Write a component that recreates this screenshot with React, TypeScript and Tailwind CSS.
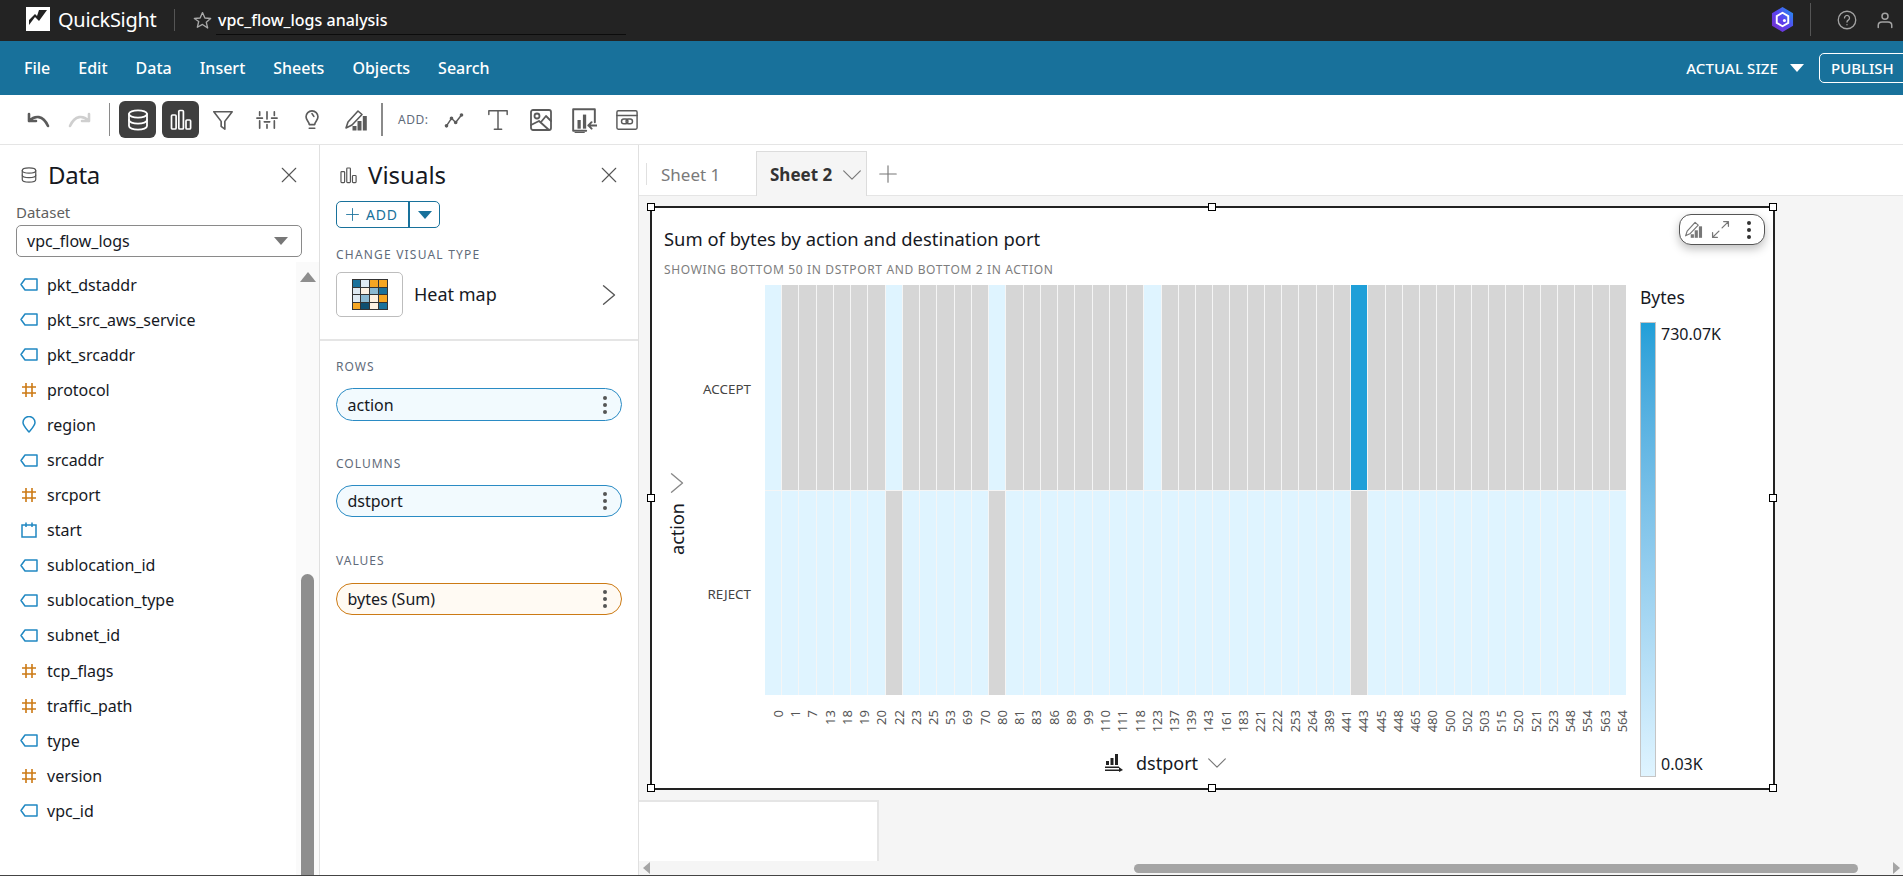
import React from "react";

const ports = [0,1,7,13,18,19,20,22,23,25,53,69,70,80,81,83,86,89,99,110,111,118,123,137,139,143,161,183,221,222,253,264,389,441,443,445,448,465,480,500,502,503,515,520,521,523,548,554,563,564];

type P = { className?: string; sw?: number; children?: React.ReactNode };
const I = ({ className = "", sw = 2, children }: P) => (
  <svg viewBox="0 0 24 24" fill="none" stroke="currentColor" strokeWidth={sw} strokeLinecap="round" strokeLinejoin="round" className={className}>{children}</svg>
);
const Db = (p: P) => <I {...p}><ellipse cx="12" cy="6" rx="9" ry="3.6"/><path d="M3 6v12c0 2 4 3.6 9 3.6s9-1.6 9-3.6V6"/><path d="M3 12c0 2 4 3.6 9 3.6s9-1.6 9-3.6"/></I>;
const Bars = (p: P) => <I {...p}><rect x="2.5" y="7" width="4.6" height="14" rx="1"/><rect x="9.8" y="2.5" width="4.6" height="18.5" rx="1"/><rect x="17" y="12" width="4.6" height="9" rx="1"/></I>;
const Funnel = (p: P) => <I {...p}><path d="M2 3h20l-8 10.5V22l-4-3v-5.5z"/></I>;
const Sliders = (p: P) => <I {...p}><path d="M4 3v4M4 13v8M12 3v8M12 17v4M20 3v4M20 13v8M1 10h6M9 14h6M17 10h6"/></I>;
const Bulb = (p: P) => <I {...p}><path d="M9 17c0-3-3.5-4.5-3.5-8.500a6.500 6.500 0 0 1 13 0c0 4-3.500 5.500-3.500 8.500z"/><path d="M9 21h6"/><path d="M12 5l2 3"/></I>;
const PenChart = (p: P) => (
  <I {...p}><path d="M2 20l2-6L14 3l4 3.500L8 17z"/><g fill="currentColor" stroke="none"><rect x="8.500" y="18" width="4" height="4.500"/><rect x="13.500" y="13" width="4" height="9.500"/><rect x="18.800" y="8" width="4" height="14.500"/></g></I>
);
const X = ({ className = "" }: P) => <I className={className} sw={1.5}><path d="M3 3l18 18M21 3L3 21"/></I>;
const Chev = ({ className = "" }: P) => <I className={className} sw={1.4}><path d="M2 7l10 10L22 7"/></I>;
const Right = ({ className = "" }: P) => <I className={className} sw={1.5}><path d="M6 2l12 10L6 22"/></I>;

const Tag = () => (
  <svg viewBox="0 0 18 13" fill="none" stroke="#2088c2" strokeWidth="1.5" strokeLinejoin="round" className="w-[18px] h-[13px]"><path d="M5 1h12v11H5L1 6.500z"/></svg>
);
const Hash = () => (
  <svg viewBox="0 0 16 16" fill="none" stroke="#cc7a14" strokeWidth="1.600" className="w-[16px] h-[16px] ml-[1px]"><path d="M5 1v14M11 1v14M1 5h14M1 11h14"/></svg>
);
const Geo = () => (
  <svg viewBox="0 0 14 17" fill="none" stroke="#2088c2" strokeWidth="1.500" strokeLinejoin="round" className="w-[14px] h-[17px] ml-[2px]"><path d="M7 16C4 12.500 1 9.500 1 6.500a6 6 0 0 1 12 0C13 9.500 10 12.500 7 16z"/></svg>
);
const Cal = () => (
  <svg viewBox="0 0 16 16" fill="none" stroke="#2088c2" strokeWidth="1.500" className="w-[16px] h-[16px] ml-[1px]"><path d="M1 3h14v12H1zM5 0.500V5M11 0.500V5"/></svg>
);

const fields: [string, React.ReactNode][] = [
  ["pkt_dstaddr", <Tag />], ["pkt_src_aws_service", <Tag />], ["pkt_srcaddr", <Tag />], ["protocol", <Hash />], ["region", <Geo />],
  ["srcaddr", <Tag />], ["srcport", <Hash />], ["start", <Cal />], ["sublocation_id", <Tag />], ["sublocation_type", <Tag />],
  ["subnet_id", <Tag />], ["tcp_flags", <Hash />], ["traffic_path", <Hash />], ["type", <Tag />], ["version", <Hash />], ["vpc_id", <Tag />],
];

const Dots = ({ className = "" }: P) => (
  <span className={"flex flex-col gap-[3px] " + className}>
    <span className="w-[4px] h-[4px] rounded-full bg-current" /><span className="w-[4px] h-[4px] rounded-full bg-current" /><span className="w-[4px] h-[4px] rounded-full bg-current" />
  </span>
);

const Pill = ({ label, h, tone }: { label: string; h: string; tone: "blue" | "orange" }) => (
  <div className={"w-[286px] rounded-full border flex items-center pl-[10.500px] pr-[14px] text-[16px] " + h + " " + (tone === "blue" ? "bg-[#f2fafe] border-[#2a8bc4]" : "bg-[#fffaf3] border-[#cc7a14]")}>
    <span className="flex-1">{label}</span>
    <Dots className="text-[#555]" />
  </div>
);

const SecLabel = ({ children, className = "" }: P) => (
  <div className={"text-[12px] leading-[18px] tracking-[1.2px] text-[#5f6b7a] " + className}>{children}</div>
);

const Handle = ({ className }: { className: string }) => (
  <span className={"absolute w-[8px] h-[8px] bg-white border-[1.5px] border-black " + className} />
);

const Triangle = ({ className = "" }: P) => (
  <span className={"w-0 h-0 border-l-[7px] border-r-[7px] border-t-[8px] border-l-transparent border-r-transparent " + className} />
);

const heatColors = ["#1a719b","#dfeaf2","#f5a623","#f5a623","#dfeaf2","#fdf1e2","#8ab8d0","#1a719b","#dfeaf2","#8ab8d0","#fdf1e2","#f5a623","#f5a623","#0f4f70","#fdf1e2","#1a719b"];

export default function App() {
  return (
    <div className="w-[1903px] h-[876px] overflow-hidden flex flex-col border-b border-[#444] bg-white text-[#16191f] font-['Noto_Sans','Open_Sans',sans-serif]">
      {/* top bar */}
      <header className="h-[41px] shrink-0 bg-[#232323] flex items-start text-white">
        <svg viewBox="0 0 24 24" className="w-[24px] h-[24px] ml-[26px] mt-[7px]">
          <rect width="24" height="24" fill="#fff" />
          <path d="M3 18l6-8 4 4 8-11h-8l-2 6-2-2-6 6z" fill="#232323" />
        </svg>
        <span className="ml-[8px] text-[20px] leading-[40px] w-[116px] tracking-[-0.3px]">QuickSight</span>
        <span className="w-px h-[22px] bg-[#555] mt-[9px]" />
        <svg viewBox="0 0 24 24" fill="none" stroke="#a9a9a9" strokeWidth="1.700" strokeLinejoin="round" className="w-[19px] h-[19px] ml-[18px] mt-[11px]"><path d="M12 2l3 6.800 7.300.7-5.500 4.800 1.700 7.200L12 17l-6.500 3.500 1.700-7.200L1.700 9.500 9 8.800z"/></svg>
        <div className="ml-[4px] w-[410px] h-[35px] border-b border-[#0c0c0c] pl-[2px] text-[16px] font-medium leading-[40px]">vpc_flow_logs analysis</div>
        <div className="ml-auto flex items-start">
          <svg viewBox="0 0 24 26" className="w-[23px] h-[25px] mt-[7px]">
            <defs><linearGradient id="qhex" x1="1" y1="0" x2="0" y2="1"><stop offset="0" stopColor="#1b9bf0"/><stop offset="0.5" stopColor="#5a43ef"/><stop offset="1" stopColor="#7a2bc8"/></linearGradient></defs>
            <path d="M12 0l11 6.500v13L12 26 1 19.500v-13z" fill="url(#qhex)"/>
            <path d="M12 6l6 3.500v7L12 20l-6-3.500v-7z" fill="none" stroke="#fff" strokeWidth="2"/>
            <circle cx="14" cy="14" r="1.600" fill="#fff"/>
          </svg>
          <span className="w-px h-[33px] bg-[#555] mt-[3px] ml-[16px]" />
          <I className="w-[20px] h-[20px] ml-[26px] mt-[10px] text-[#a3a3a3]" sw={1.6}><circle cx="12" cy="12" r="10.500"/><path d="M9 9.500a3 3 0 1 1 4.500 2.600c-1 .6-1.500 1.200-1.500 2.400M12 17.500v.3"/></I>
          <I className="w-[18px] h-[18px] ml-[19px] mr-[9px] mt-[11px] text-[#a3a3a3]" sw={2}><circle cx="12" cy="7" r="4"/><path d="M3 22v-3c0-3 2.500-4.500 5-4.500h8c2.500 0 5 1.500 5 4.500v3"/></I>
        </div>
      </header>

      {/* menu */}
      <nav className="h-[54px] shrink-0 bg-[#18719b] flex items-center pl-[24px] gap-[28px] text-white text-[16px] font-medium">
        {["File","Edit","Data","Insert","Sheets","Objects","Search"].map((m) => <span key={m}>{m}</span>)}
        <span className="ml-auto text-[15px] tracking-[0.1px]">ACTUAL SIZE</span>
        <Triangle className="border-t-white -ml-[16px]" />
        <span className="-ml-[13px] -mr-[30px] w-[114px] h-[30px] rounded-[5px] border border-white flex items-center pl-[11px] text-[15px]">PUBLISH</span>
      </nav>

      {/* toolbar */}
      <div className="h-[50px] shrink-0 border-b border-[#e5e5e5] flex items-center text-[#5b5b5b]">
        <svg viewBox="0 0 24 16" fill="none" stroke="#5b5b5b" strokeWidth="2.600" strokeLinecap="round" strokeLinejoin="round" className="w-[24px] h-[16px] ml-[26px]"><path d="M3 2v7h7M3 9c6-6 14-6 19 5"/></svg>
        <svg viewBox="0 0 24 16" fill="none" stroke="#cfcfcf" strokeWidth="2.600" strokeLinecap="round" strokeLinejoin="round" className="w-[24px] h-[16px] ml-[18px]"><path d="M21 2v7h-7M21 9C15 3 7 3 2 14"/></svg>
        <span className="w-px h-[33px] bg-[#8a8a8a] ml-[17px]" />
        <span className="w-[37px] h-[37px] rounded-[6px] bg-[#3f3f3f] ml-[9px] flex items-center justify-center text-white"><Db className="w-[24px] h-[26px]" sw={1.8} /></span>
        <span className="w-[37px] h-[37px] rounded-[6px] bg-[#3f3f3f] ml-[6px] flex items-center justify-center text-white"><Bars className="w-[24px] h-[24px]" sw={1.7} /></span>
        <Funnel className="w-[22px] h-[24px] ml-[13px]" sw={1.8} />
        <Sliders className="w-[24px] h-[22px] ml-[21px]" sw={1.8} />
        <Bulb className="w-[22px] h-[26px] ml-[22px]" sw={1.8} />
        <PenChart className="w-[24px] h-[24px] ml-[21px]" sw={1.6} />
        <span className="w-[2px] h-[33px] bg-[#8a8a8a] ml-[13px]" />
        <span className="ml-[15px] text-[12px] tracking-[0.5px] w-[36px] text-[#5f6b7a]">ADD:</span>
        <I className="w-[24px] h-[20px] ml-[8px]" sw={1.8}><path d="M3 19l6-9 5 5 7-9"/><g fill="currentColor"><circle cx="3" cy="19" r="1.300"/><circle cx="9" cy="10" r="1.300"/><circle cx="14" cy="15" r="1.300"/><circle cx="21" cy="6" r="1.300"/></g></I>
        <I className="w-[22px] h-[22px] ml-[21px]" sw={1.6}><path d="M2 6V2h20v4M12 2v20M8 22h8"/></I>
        <I className="w-[24px] h-[24px] ml-[20px]" sw={1.8}><rect x="2" y="2" width="20" height="20" rx="2"/><circle cx="8" cy="8" r="2.500"/><path d="M2 17l8-4 10 9M12 14l5-6 5 5"/></I>
        <I className="w-[26px] h-[26px] ml-[18px]" sw={1.8}><path d="M14 22H2V2h20v12"/><path d="M4 24h8"/><g fill="currentColor" stroke="none"><rect x="6" y="12" width="3" height="8"/><rect x="11" y="7" width="3" height="13"/></g><path d="M24 17h-8M19 14l-3 3 3 3"/></I>
        <I className="w-[22px] h-[22px] ml-[19px]" sw={1.6}><rect x="1" y="2" width="22" height="20" rx="1.500"/><path d="M1 7h22"/><rect x="6" y="11" width="7" height="5" rx="2.500"/><rect x="11" y="11" width="7" height="5" rx="2.500"/></I>
      </div>

      <div className="flex flex-1 min-h-0">
        {/* data panel */}
        <aside className="w-[320px] shrink-0 border-r border-[#e0e0e0] flex flex-col">
          <div className="h-[60px] shrink-0 flex items-center pl-[20px] pr-[21px]">
            <Db className="w-[18px] h-[20px] text-[#555]" sw={1.6} />
            <span className="ml-[10px] text-[24px] tracking-[-0.3px] flex-1">Data</span>
            <X className="w-[18px] h-[18px] text-[#555]" />
          </div>
          <div className="pl-[16px] text-[15px] leading-[20px] text-[#5f5f5f] -mt-[3px]">Dataset</div>
          <div className="ml-[16px] w-[286px] h-[32px] shrink-0 mt-[3px] rounded-[5px] border border-[#8a8a8a] flex items-center pl-[10px] pr-[13px] text-[16px]">
            <span className="flex-1">vpc_flow_logs</span>
            <Triangle className="border-t-[#777]" />
          </div>
          <div className="flex flex-1 min-h-0 mt-[5px] overflow-hidden">
            <ul className="flex-1 pt-[5px] pl-[20px]">
              {fields.map(([n, ic]) => (
                <li key={n} className="h-[35.100px] flex items-center text-[16px]">
                  <span className="w-[27px] flex items-center">{ic}</span>{n}
                </li>
              ))}
            </ul>
            <div className="w-[23px] shrink-0 bg-[#fafafa] flex flex-col justify-between items-center">
              <span className="mt-[10px] w-0 h-0 border-l-[8px] border-r-[8px] border-b-[10px] border-l-transparent border-r-transparent border-b-[#8e8e8e]" />
              <span className="w-[13px] h-[301px] bg-[#8e8e8e] rounded-t-[7px]" />
            </div>
          </div>
        </aside>

        {/* visuals panel */}
        <aside className="w-[319px] shrink-0 border-r border-[#e0e0e0] flex flex-col">
          <div className="h-[56px] shrink-0 flex items-center pl-[19px] pr-[20px] pt-[4px]">
            <Bars className="w-[19px] h-[19px] text-[#555]" sw={1.5} />
            <span className="ml-[10px] text-[24px] flex-1">Visuals</span>
            <X className="w-[18px] h-[18px] text-[#555]" />
          </div>
          <div className="ml-[16px] w-[104px] h-[27px] shrink-0 rounded-[5px] border border-[#18719b] flex items-center text-[#18719b] text-[14px] tracking-[0.8px]">
            <span className="w-[71px] flex items-center pl-[9px] gap-[7px]"><I className="w-[13px] h-[13px]" sw={1.6}><path d="M12 1v22M1 12h22"/></I>ADD</span>
            <span className="w-[2px] h-full bg-[#18719b]" />
            <span className="flex-1 flex justify-center"><Triangle className="border-t-[#18719b]" /></span>
          </div>
          <SecLabel className="ml-[16px] mt-[18px]">CHANGE VISUAL TYPE</SecLabel>
          <div className="ml-[16px] mr-[18px] mt-[8px] flex items-center">
            <span className="w-[67px] h-[45px] rounded-[5px] border border-[#bdbdbd] flex items-center justify-center">
              <span className="w-[36px] h-[31px] bg-[#333] p-[1px] grid grid-cols-4 grid-rows-4 gap-px">
                {heatColors.map((c, i) => <span key={i} style={{ background: c }} />)}
              </span>
            </span>
            <span className="ml-[11px] flex-1 text-[18px]">Heat map</span>
            <Right className="w-[22px] h-[22px] text-[#555]" />
          </div>
          <div className="h-[2px] shrink-0 bg-[#e5e5e5] mt-[22px]" />
          <SecLabel className="ml-[16px] mt-[17px] tracking-[1px]">ROWS</SecLabel>
          <div className="ml-[16px] mt-[12px]"><Pill label="action" h="h-[33px]" tone="blue" /></div>
          <SecLabel className="ml-[16px] mt-[34px] tracking-[1px]">COLUMNS</SecLabel>
          <div className="ml-[16px] mt-[12px]"><Pill label="dstport" h="h-[32px]" tone="blue" /></div>
          <SecLabel className="ml-[16px] mt-[35px] tracking-[1px]">VALUES</SecLabel>
          <div className="ml-[16px] mt-[13px]"><Pill label="bytes (Sum)" h="h-[32px]" tone="orange" /></div>
        </aside>

        {/* main */}
        <main className="flex-1 min-w-0 flex flex-col">
          <div className="h-[51px] shrink-0 border-b border-[#e5e5e5] flex items-end relative">
            <div className="flex items-center h-[44px] w-[117px] shrink-0 pl-[7px] pt-[1px]">
              <span className="w-px h-[22px] bg-[#e0e0e0]" />
              <span className="ml-[14px] text-[17px] text-[#7a7a7a] pt-[2px]">Sheet 1</span>
            </div>
            <div className="w-[111px] h-[45px] -mb-px bg-[#f5f5f5] border border-b-0 border-[#dcdcdc] flex items-center pl-[13px] pt-[2px] text-[17px] font-bold text-[#333]">
              Sheet 2
              <Chev className="w-[20px] h-[20px] ml-[10px] text-[#777]" />
            </div>
            <I className="w-[18px] h-[18px] ml-[12px] mb-[12px] text-[#777]" sw={1.5}><path d="M12 1v22M1 12h22"/></I>
          </div>
          <div className="flex-1 min-h-0 bg-[#f5f5f5] flex flex-col">
            <div className="relative ml-[11px] mt-[10px] w-[1125px] h-[584px] shrink-0 bg-white border-2 border-[#222]">
              <Handle className="-left-[5px] -top-[5px]" />
              <Handle className="left-[556px] -top-[5px]" />
              <Handle className="-right-[4px] -top-[5px]" />
              <Handle className="-left-[5px] top-1/2 -translate-y-1/2" />
              <Handle className="-right-[4px] top-1/2 -translate-y-1/2" />
              <Handle className="-left-[5px] -bottom-[4px]" />
              <Handle className="left-[556px] -bottom-[4px]" />
              <Handle className="-right-[4px] -bottom-[4px]" />
              <div className="absolute right-[8px] top-[6px] w-[86px] h-[31px] rounded-[12px] border border-[#555] bg-white shadow-[0_4px_10px_rgba(0,0,0,0.25)] flex items-center pl-[4px] text-[#777]">
                <PenChart className="w-[19px] h-[19px]" sw={1.5} />
                <I className="w-[19px] h-[19px] ml-[8px]" sw={1.6}><path d="M14 10l8-8M16 2h6v6M10 14l-8 8M2 16v6h6"/></I>
                <Dots className="ml-[17px] text-[#333]" />
              </div>

              <div className="pl-[12px] pt-[19px] text-[18.4px] leading-[24px]">Sum of bytes by action and destination port</div>
              <div className="pl-[12px] mt-[10px] text-[12px] leading-[18px] text-[#7d7d7d] tracking-[0.65px]">SHOWING BOTTOM 50 IN DSTPORT AND BOTTOM 2 IN ACTION</div>

              <div className="mt-[6px] flex">
                <div className="w-[974px]">
                  <div className="flex h-[410px]">
                    <div className="w-[50px] flex flex-col items-center pt-[187px]">
                      <Right className="w-[22px] h-[22px] text-[#888]" />
                      <span className="mt-[9px] [writing-mode:vertical-rl] rotate-180 text-[18px] leading-[22px]">action</span>
                    </div>
                    <div className="w-[63px] pr-[14px] flex flex-col text-[13.4px] text-[#444] text-right">
                      <span className="h-[205px] pt-[3px] flex items-center justify-end">ACCEPT</span>
                      <span className="h-[205px] pt-[3px] flex items-center justify-end">REJECT</span>
                    </div>
                    <div className="w-[861px] grid grid-cols-[repeat(50,minmax(0,1fr))] grid-rows-2 gap-px bg-[#f5f5f5]">
                      {ports.map((p) => (
                        <span key={"a" + p} className={p === 443 ? "bg-[#1f9fd8]" : p === 0 || p === 22 || p === 80 || p === 123 ? "bg-[#dff4ff]" : "bg-[#d6d6d6]"} />
                      ))}
                      {ports.map((p) => (
                        <span key={"r" + p} className={p === 22 || p === 80 || p === 443 ? "bg-[#d6d6d6]" : "bg-[#dff4ff]"} />
                      ))}
                    </div>
                  </div>
                  <div className="ml-[113px] w-[861px] h-[50px] pt-[15px] grid grid-cols-[repeat(50,minmax(0,1fr))] items-start text-[13px] leading-[17px] text-[#555]">
                    {ports.map((p) => (
                      <span key={p} className="[writing-mode:vertical-rl] rotate-180 justify-self-start ml-[5px]">{p}</span>
                    ))}
                  </div>
                  <div className="h-[36px] pl-[453px] flex items-center">
                    <svg viewBox="0 0 18 18" className="w-[18px] h-[18px] text-[#222]" fill="currentColor">
                      <rect x="1" y="7" width="3" height="4" /><rect x="5.500" y="4" width="3" height="7" /><rect x="10" y="0" width="3" height="11" />
                      <path d="M0 12.500h14v1.500H0zM0 15.500h15v1.500H0z" /><path d="M14 13l4 3-4 2z" />
                    </svg>
                    <span className="ml-[13px] text-[18px] leading-[24px]">dstport</span>
                    <Chev className="ml-[9px] w-[20px] h-[20px] text-[#777]" />
                  </div>
                </div>
                <div className="ml-[14px]">
                  <div className="text-[17.500px] leading-[24px]">Bytes</div>
                  <div className="mt-[13px] h-[455px] flex">
                    <span className="w-[16px] h-full border border-[#c5c5c5] bg-gradient-to-b from-[#1f9fd8] to-[#dff4ff]" />
                    <div className="ml-[5px] flex flex-col justify-between text-[16px] leading-[24px]">
                      <span>730.07K</span><span className="-translate-y-px">0.03K</span>
                    </div>
                  </div>
                </div>
              </div>
            </div>
            <div className="flex-1 min-h-0 mt-[10px] w-[240px] bg-white border-t-2 border-r-2 border-[#e5e5e5]" />
            <div className="h-[14px] shrink-0 flex items-center relative">
              <span className="ml-[4px] w-0 h-0 border-t-[6px] border-b-[6px] border-r-[7px] border-t-transparent border-b-transparent border-r-[#a5a5a5]" />
              <span className="ml-[484px] w-[724px] h-[9px] rounded-full bg-[#a5a5a5]" />
              <span className="ml-auto mr-[3px] w-0 h-0 border-t-[6px] border-b-[6px] border-l-[7px] border-t-transparent border-b-transparent border-l-[#a5a5a5]" />
            </div>
          </div>
        </main>
      </div>
    </div>
  );
}
